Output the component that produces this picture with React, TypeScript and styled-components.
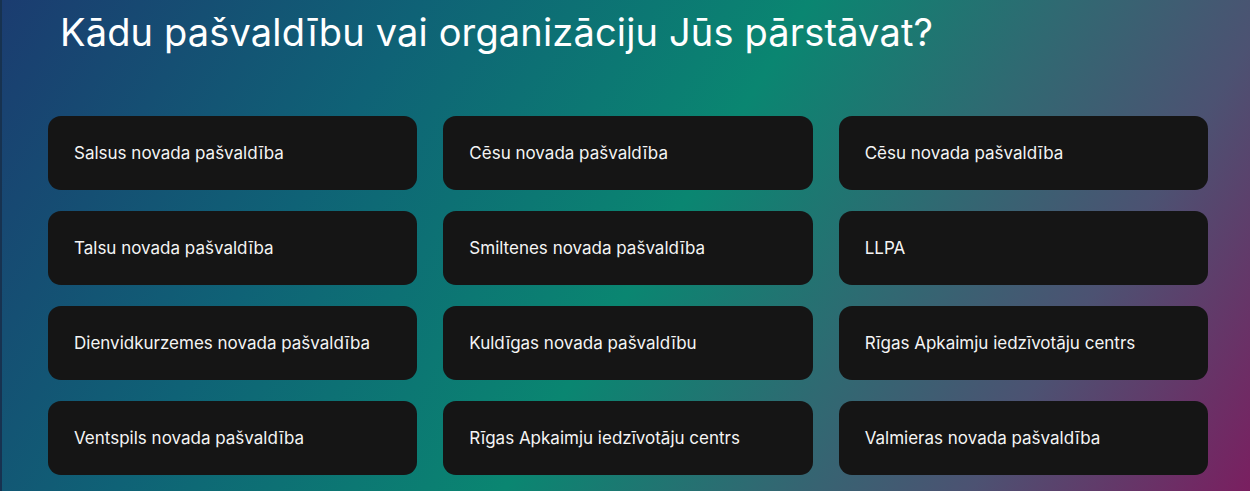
import styled, { createGlobalStyle } from "styled-components";

const GlobalStyle = createGlobalStyle`
  html, body {
    margin: 0;
    padding: 0;
  }
  body {
    font-family: Inter, "Noto Sans", sans-serif;
  }
`

const Page = styled.div`
  width: 1250px;
  height: 491px;
  overflow: hidden;
  box-sizing: border-box;
  padding: 8px 42px 0 48px;
  background: linear-gradient(122deg, #1b3c70 0%, #0f6276 27%, #0a8671 52%, #2f6a72 68%, #4c5272 82%, #7a1f60 100%);
  border-left: 2px solid #173250;
`

const Title = styled.h1`
  margin: 0 0 0 10px;
  font-size: 38px;
  line-height: 48px;
  font-weight: 400;
  letter-spacing: 0.15px;
  color: #ffffff;
`

const OptionsGrid = styled.div`
  display: grid;
  grid-template-columns: repeat(3, 1fr);
  column-gap: 26px;
  row-gap: 21px;
  margin-top: 60px;
  margin-left: -2px;
`

const OptionCard = styled.button`
  display: flex;
  align-items: center;
  height: 74px;
  padding: 0 26px;
  border: none;
  border-radius: 13px;
  background-color: #151515;
  color: #f4f4f4;
  font-family: inherit;
  font-size: 17px;
  font-weight: 400;
  text-align: left;
  cursor: pointer;
`

const options = [
    "Salsus novada pašvaldība",
    "Cēsu novada pašvaldība",
    "Cēsu novada pašvaldība",
    "Talsu novada pašvaldība",
    "Smiltenes novada pašvaldība",
    "LLPA",
    "Dienvidkurzemes novada pašvaldība",
    "Kuldīgas novada pašvaldību",
    "Rīgas Apkaimju iedzīvotāju centrs",
    "Ventspils novada pašvaldība",
    "Rīgas Apkaimju iedzīvotāju centrs",
    "Valmieras novada pašvaldība",
]

const App = () => {
    return (
        <>
            <GlobalStyle/>
            <Page>
                <Title>Kādu pašvaldību vai organizāciju Jūs pārstāvat?</Title>
                <OptionsGrid>
                    {options.map((name, i) => (
                        <OptionCard key={i}>{name}</OptionCard>
                    ))}
                </OptionsGrid>
            </Page>
        </>
    )
}

export default App
